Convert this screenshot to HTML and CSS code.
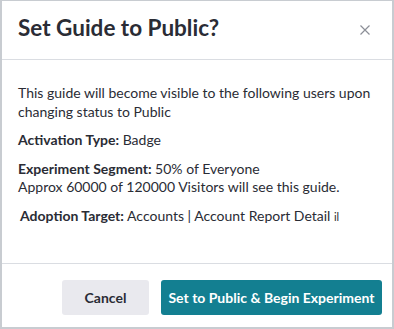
FILE: index.html
```html
<!DOCTYPE html>
<html lang="en">
<head>
    <meta charset="UTF-8">
    <meta name="viewport" content="width=device-width, initial-scale=1.0">
    <title>Set Guide to Public?</title>
    <link rel="stylesheet" href="styles.css">
</head>
<body>

<div class="modal">
    <div class="modal-header">
        <h2>Set Guide to Public?</h2>
        <span class="close" title="Close">
            <svg width="10" height="10" viewBox="0 0 10 10"><path d="M0.5 0.5 L9.5 9.5 M9.5 0.5 L0.5 9.5" stroke="#8c8f97" stroke-width="1.2" fill="none"/></svg>
        </span>
    </div>

    <div class="modal-body">
        <p>This guide will become visible to the following users upon changing status to Public</p>
        <p><b>Activation Type:</b> Badge</p>
        <p><b>Experiment Segment:</b> 50% of Everyone<br>Approx 60000 of 120000 Visitors will see this guide.</p>
        <p class="target"><b>Adoption Target:</b> Accounts | Account Report Detail <span class="tag">il</span></p>
    </div>

    <div class="modal-footer">
        <button class="btn btn-cancel">Cancel</button>
        <button class="btn btn-primary">Set to Public &amp; Begin Experiment</button>
    </div>
</div>

</body>
</html>
```

FILE: styles.css
```css
body {
    margin: 0;
    font-family: Lato, "Open Sans", sans-serif;
    color: #2a2c35;
    background-color: #fff;
}
.modal {
    width: 394px;
    height: 329px;
    box-sizing: border-box;
    border: 1px solid #c8ccd1;
    border-left-width: 2px;
    border-right-width: 2px;
    border-bottom-width: 2px;
    display: flex;
    flex-direction: column;
}
.modal-header {
    height: 58px;
    padding: 0 22px 0 16px;
    display: flex;
    align-items: center;
    justify-content: space-between;
    border-bottom: 1px solid #dadde2;
}
.modal-header h2 {
    margin: 0 0 5px;
    font-size: 22.5px;
    font-weight: 700;
}
.close {
    display: flex;
    cursor: pointer;
}
.modal-body {
    flex: 1;
    padding: 24px 16px 0;
    font-size: 14px;
    line-height: 18.5px;
}
.modal-body p {
    margin: 0 0 10px;
}
.modal-body .target {
    margin-left: 2px;
}
.tag {
    font-size: 11px;
}
.modal-footer {
    display: flex;
    justify-content: flex-end;
    gap: 12px;
    padding: 16px 10px 12px;
    border-top: 1px solid #dadde2;
}
.btn {
    height: 35px;
    border: none;
    border-radius: 3px;
    font-family: inherit;
    font-size: 14px;
    font-weight: 700;
    cursor: pointer;
}
.btn-cancel {
    width: 87px;
    background-color: #e9e9ee;
    color: #2a2c35;
}
.btn-primary {
    width: 221px;
    background-color: #137f91;
    color: #fff;
}
```
